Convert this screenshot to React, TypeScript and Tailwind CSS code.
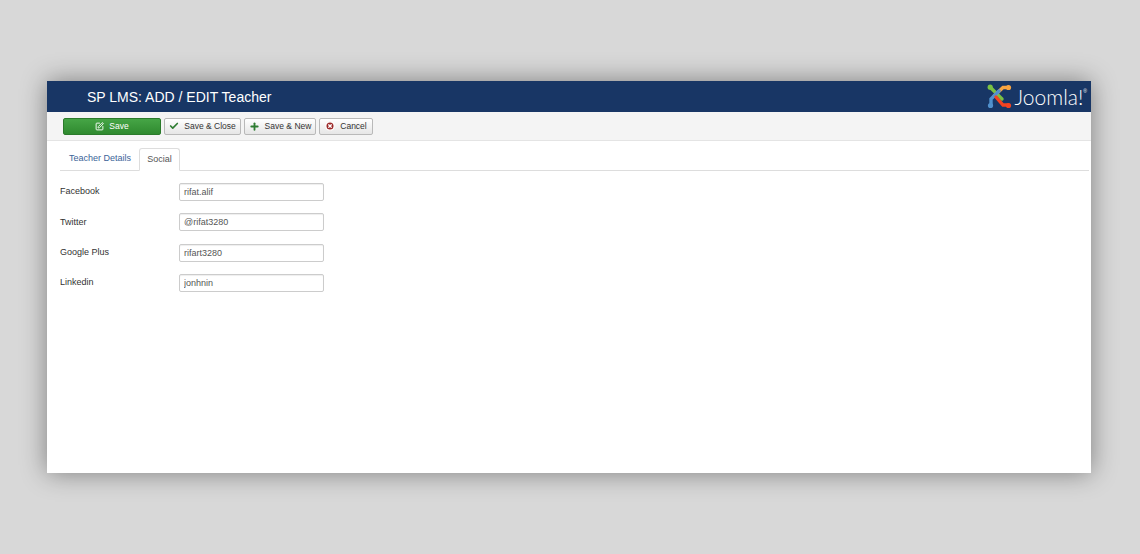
import { Check, Plus, SquarePen, CircleX } from 'lucide-react';

const fields = [
  { label: 'Facebook', value: 'rifat.alif' },
  { label: 'Twitter', value: '@rifat3280' },
  { label: 'Google Plus', value: 'rifart3280' },
  { label: 'Linkedin', value: 'jonhnin' },
];

function JoomlaMark() {
  return (
    <svg width="25" height="25" viewBox="0 0 25 25" fill="none" strokeLinecap="round">
      <path d="M3 3 L8 8 L15 15" stroke="#7ac143" strokeWidth="3.4" />
      <circle cx="3.2" cy="3.2" r="2.6" fill="#7ac143" />
      <path d="M21 3.5 H16 L7 12" stroke="#f9a541" strokeWidth="3.4" />
      <circle cx="21.5" cy="3.5" r="2.6" fill="#f9a541" />
      <path d="M4 21.5 V15 L12 7" stroke="#5091cd" strokeWidth="3.4" />
      <circle cx="3.5" cy="21.5" r="2.6" fill="#5091cd" />
      <path d="M21.5 21 H16 L9 13" stroke="#f44321" strokeWidth="3.4" />
      <circle cx="21.5" cy="21.5" r="2.6" fill="#f44321" />
    </svg>
  );
}

function ToolButton({ label, icon, width }: { label: string; icon: React.ReactNode; width: string }) {
  return (
    <button className={`flex h-[17px] items-center justify-center gap-[5px] rounded-[2px] border border-[#b9b9b9] bg-gradient-to-b from-[#ffffff] to-[#e6e6e6] text-[8.5px] text-[#333333] ${width}`}>
      {icon}
      <span>{label}</span>
    </button>
  );
}

export default function App() {
  return (
    <div className="h-[554px] w-[1140px] overflow-hidden bg-[#d8d8d8] pl-[47px] pt-[81px] font-['Liberation_Sans',Arial,sans-serif]">
      <div className="flex h-[392px] w-[1044px] flex-col bg-white shadow-[0_0_24px_rgba(0,0,0,0.42)]">
        <header className="flex h-[31px] shrink-0 items-center justify-between bg-[#183665] pl-[40px] pr-[4px]">
          <h1 className="text-[14px] leading-none text-white">SP LMS: ADD / EDIT Teacher</h1>
          <div className="flex items-center gap-[3px]">
            <JoomlaMark />
            <span className="font-['Lato',sans-serif] text-[21px] font-light leading-none text-white">Joomla!</span>
            <span className="-ml-[3px] -mt-[11px] text-[5px] leading-none text-white">®</span>
          </div>
        </header>

        <div className="flex h-[29px] shrink-0 items-center gap-[3px] border-b border-[#e4e4e4] bg-[#f4f4f4] pl-[16px]">
          <button className="mr-0 flex h-[17px] w-[98px] items-center justify-center gap-[5px] rounded-[2px] border border-[#2b7a2b] bg-gradient-to-b from-[#46a546] to-[#2f8a2f] text-[8.5px] text-white">
            <SquarePen size={9} strokeWidth={2.5} />
            <span>Save</span>
          </button>
          <ToolButton label="Save & Close" width="w-[77px]" icon={<Check size={10} strokeWidth={4} className="text-[#2f7d32]" />} />
          <ToolButton label="Save & New" width="w-[72px]" icon={<Plus size={11} strokeWidth={4} className="text-[#2f7d32]" />} />
          <ToolButton label="Cancel" width="w-[54px]" icon={<CircleX size={10} strokeWidth={3} className="fill-[#9c2a2a] text-white" />} />
        </div>

        <div className="mx-[13px] mr-[2px] mt-[7px] flex h-[23px] items-end border-b border-[#dddddd] pl-[1px]">
          <div className="flex h-[22px] w-[78px] items-center justify-center text-[9px] text-[#3c6499]">Teacher Details</div>
          <div className="-mb-px flex h-[23px] w-[41px] items-center justify-center rounded-t-[3px] border border-b-white border-[#dddddd] bg-white text-[9px] text-[#555555]">Social</div>
        </div>

        <div className="ml-[13px] mt-[12px] flex flex-col gap-[12.33px]">
          {fields.map(f => (
            <div key={f.label} className="flex h-[18px] items-center">
              <label className="w-[119px] text-[9px] text-[#333333]">{f.label}</label>
              <input
                readOnly
                value={f.value}
                className="h-[18px] w-[145px] rounded-[2px] border border-[#cccccc] bg-white px-[4px] text-[9px] text-[#555555] shadow-[inset_0_1px_1px_rgba(0,0,0,0.07)] outline-none"
              />
            </div>
          ))}
        </div>
      </div>
    </div>
  );
}
